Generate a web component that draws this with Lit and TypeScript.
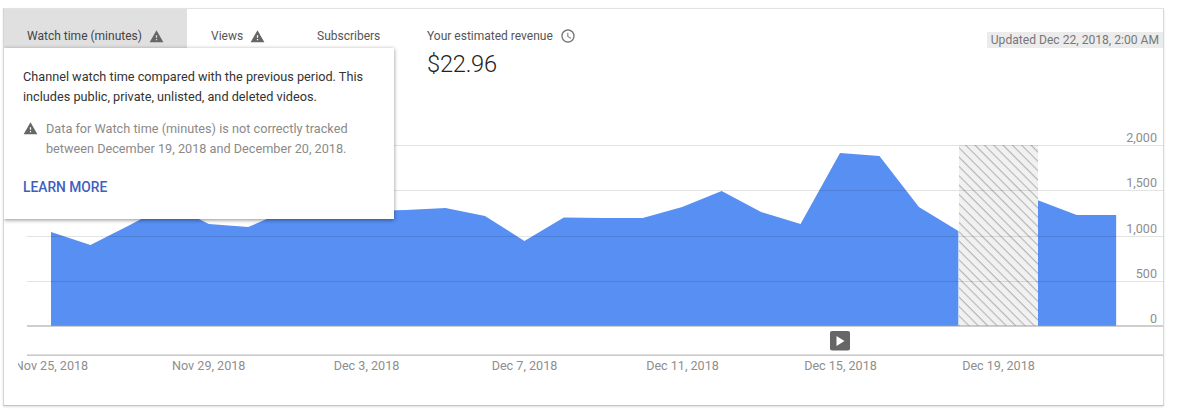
import { LitElement, html, css, svg } from "lit";
import { customElement } from "lit/decorators.js";

const WARN = "M1 21h22L12 2 1 21zm12-3h-2v-2h2v2zm0-4h-2v-4h2v4z";
const CLOCK = "M11.99 2C6.47 2 2 6.48 2 12s4.47 10 9.99 10C17.52 22 22 17.52 22 12S17.52 2 11.99 2zM12 20c-4.42 0-8-3.58-8-8s3.58-8 8-8 8 3.58 8 8-3.58 8-8 8zm.5-13H11v6l5.25 3.15.75-1.23-4.5-2.67z";

const X0 = 51;
const STEP = 39.45;
const LEFT_Y = [232, 245, 225, 204, 224, 227, 210, 211, 211, 210, 208, 216, 241, 217.5, 218, 218, 207, 191, 212, 224, 153, 156, 207, 231];
const RIGHT_Y = [200, 215, 215];
const pts = (ys: number[], start: number) => ys.map((y, i) => [X0 + STEP * (start + i), y] as const);
const area = (ys: number[], start: number) => {
  const p = pts(ys, start);
  return `M${p[0][0]} 326 ` + p.map(([x, y]) => `L${x} ${y}`).join(" ") + ` L${p[p.length - 1][0]} 326 Z`;
};

const GRID = [145, 190, 236, 281];
const YLABELS: [string, number][] = [["2,000", 142], ["1,500", 187], ["1,000", 233], ["500", 278], ["0", 323]];
const XLABELS: [string, number][] = [
  ["Nov 25, 2018", 51.5], ["Nov 29, 2018", 208.7], ["Dec 3, 2018", 366.5], ["Dec 7, 2018", 524.5],
  ["Dec 11, 2018", 682.5], ["Dec 15, 2018", 840.5], ["Dec 19, 2018", 998.5],
];

@customElement("app-root")
export class AppRoot extends LitElement {
  static styles = css`
    :host {
      display: block;
      width: 1200px;
      height: 414px;
      padding: 8px 0 0 3px;
      box-sizing: border-box;
      background: #fff;
      font-family: Roboto, "Liberation Sans", sans-serif;
      overflow: hidden;
    }
    .card {
      position: relative;
      width: 1161px;
      height: 398px;
      box-sizing: border-box;
      border: 1px solid #e2e2e2;
      border-left-color: #d4d4d4;
      border-bottom-color: #c4c4c4;
      border-right-color: #d8d8d8;
      box-shadow: 0 1px 2px rgba(0, 0, 0, 0.12);
      overflow: hidden;
      background: #fff;
    }
    .tabs {
      display: flex;
      align-items: flex-start;
      height: 116px;
    }
    .tab {
      box-sizing: border-box;
      height: 60px;
      padding: 18px 0 0 24px;
      color: #555;
      font-size: 12px;
    }
    .tab.active {
      width: 183px;
      padding-left: 23px;
      background: #e0e0e0;
      color: #444;
    }
    .tab.views { width: 106px; }
    .tab.subs { width: 110px; }
    .label {
      display: flex;
      align-items: center;
      height: 18px;
      white-space: nowrap;
    }
    .label svg { display: block; fill: #666; }
    .label .warn { width: 15px; height: 15px; margin-left: 7px; }
    .label .clock { width: 16px; height: 16px; margin-left: 7px; fill: #757575; }
    .value {
      margin-top: 4px;
      font-size: 23.6px;
      line-height: 30px;
      font-weight: 300;
      color: #222;
      letter-spacing: -0.2px;
    }
    .updated {
      margin: 23px 0 0 auto;
      box-sizing: border-box;
      height: 16px;
      line-height: 16px;
      padding: 0 4px;
      background: #ececec;
      color: #777;
      font-size: 12.1px;
      white-space: nowrap;
    }
    .chart {
      display: block;
      width: 1146px;
      height: 260px;
      margin-left: 14px;
    }
    .chart text { font-family: Roboto, "Liberation Sans", sans-serif; fill: #8e8e8e; font-size: 12.6px; }
    .popup {
      position: absolute;
      left: 0;
      top: 39px;
      width: 390px;
      height: 171px;
      box-sizing: border-box;
      padding: 19px 20px 0 19px;
      background: #fff;
      box-shadow: 0 1px 4px rgba(0, 0, 0, 0.45);
      font-size: 12.7px;
      line-height: 20px;
      color: #333;
    }
    .note {
      display: flex;
      margin-top: 12px;
      color: #8a8a8a;
      line-height: 19.5px;
    }
    .note svg { flex: none; width: 15px; height: 15px; margin: 2px 8px 0 0; fill: #666; }
    .more {
      margin-top: 19px;
      color: #3f5fbf;
      font-weight: 500;
      font-size: 13.8px;
    }
  `;

  private icon(d: string, cls: string) {
    return html`<svg class=${cls} viewBox="0 0 24 24"><path d=${d}></path></svg>`;
  }

  private chart() {
    return html`<svg class="chart" viewBox="18 125 1146 260">
      <defs>
        <pattern id="hatch" width="6.6" height="6.6" patternUnits="userSpaceOnUse" patternTransform="rotate(45)">
          <rect width="6.6" height="6.6" fill="#f1f1f1"></rect>
          <rect width="6.6" height="1.1" fill="#b4b4b4"></rect>
        </pattern>
      </defs>
      <path d=${area(LEFT_Y, 0)} fill="#578ff2"></path>
      <path d=${area(RIGHT_Y, 25)} fill="#578ff2"></path>
      <rect x="959" y="145" width="79" height="181" fill="url(#hatch)"></rect>
      ${GRID.map((y) => svg`<rect x="27" y=${y} width="1136" height="1" fill="rgba(0,0,0,0.11)"></rect>`)}
      <rect x="27" y="325.5" width="1136" height="1" fill="#9e9e9e"></rect>
      <rect x="27" y="354.5" width="1136" height="1.3" fill="#bdbdbd"></rect>
      ${YLABELS.map(([t, y]) => svg`<text x="1157" y=${y} text-anchor="end">${t}</text>`)}
      ${XLABELS.map(([t, x]) => svg`<text x=${x} y="370" text-anchor="middle">${t}</text>`)}
      <rect x="830" y="331" width="20" height="19.5" rx="2" fill="#666"></rect>
      <path d="M836.5 336 L844.5 341 L836.5 346 Z" fill="#fff"></path>
    </svg>`;
  }

  render() {
    return html`<div class="card">
      <div class="tabs">
        <div class="tab active"><div class="label">Watch time (minutes)${this.icon(WARN, "warn")}</div></div>
        <div class="tab views"><div class="label">Views${this.icon(WARN, "warn")}</div></div>
        <div class="tab subs"><div class="label">Subscribers</div></div>
        <div class="tab"><div class="label">Your estimated revenue${this.icon(CLOCK, "clock")}</div><div class="value">$22.96</div></div>
        <div class="updated">Updated Dec 22, 2018, 2:00 AM</div>
      </div>
      ${this.chart()}
      <div class="popup">
        <div>Channel watch time compared with the previous period. This includes public, private, unlisted, and deleted videos.</div>
        <div class="note">${this.icon(WARN, "")}<div>Data for Watch time (minutes) is not correctly tracked between December 19, 2018 and December 20, 2018.</div></div>
        <div class="more">LEARN MORE</div>
      </div>
    </div>`;
  }
}
